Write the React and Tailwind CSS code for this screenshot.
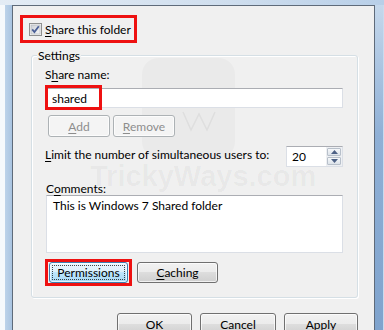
import React from 'react';

const U = ({ children }) => <span className="underline underline-offset-[2px]">{children}</span>;

const WinButton = ({ children, className = '', disabled = false, focused = false }) => {
    let look = 'border-[#707070] bg-[linear-gradient(#f2f2f2_0%,#ebebeb_50%,#dddddd_50%,#cfcfcf_100%)] text-black';
    if (disabled) look = 'border-[#adb2b5] bg-[#f4f4f4] text-[#8d8d8d]';
    if (focused) look = 'border-[#3c7fb1] bg-[linear-gradient(#eaf6fd_0%,#d9f0fc_50%,#bee6fd_50%,#a7d9f5_100%)] text-black';
    return (
        <div className={`relative flex items-center justify-center rounded-[3px] border shadow-[inset_0_0_0_1px_rgba(255,255,255,0.7)] ${look} ${className}`}>
            {focused && <div className="absolute inset-[2px] border border-dotted border-black/70"></div>}
            <span className="relative">{children}</span>
        </div>
    );
};

const Checkbox = () => (
    <svg width="13" height="13" viewBox="0 0 13 13" className="shrink-0">
        <defs>
            <linearGradient id="cbg" x1="0" y1="0" x2="1" y2="1">
                <stop offset="0" stopColor="#cbcfd5" />
                <stop offset="1" stopColor="#f6f6f6" />
            </linearGradient>
        </defs>
        <rect x="0.5" y="0.5" width="12" height="12" fill="#f4f4f4" stroke="#8e8f8f" />
        <rect x="2" y="2" width="9" height="9" fill="url(#cbg)" stroke="#aeb3b9" strokeWidth="0.6" />
        <path d="M3.2 6.4 L5.4 9 L9.8 3.2" fill="none" stroke="#4a5f97" strokeWidth="1.8" />
    </svg>
);

const App = () => {
    return (
        <div className="relative w-[384px] h-[330px] overflow-hidden bg-[linear-gradient(90deg,#f3f7fb_0%,#c9dbee_100%)] font-['Lato',sans-serif] text-[12px] leading-[15px] text-black">
            {/* Window frame top strip */}
            <div className="h-[5px] bg-[linear-gradient(90deg,#e4ecf5,#cfdeee_60%,#b8cfe8)]"></div>

            <div className="flex h-[325px]">
                {/* Left glass frame */}
                <div className="w-[12px] bg-[linear-gradient(90deg,#f6f9fc_0%,#f6f9fc_40%,#bcd2e9_45%,#a9c4e1_100%)]"></div>

                {/* Dialog body */}
                <div className="relative w-[363px] border-l border-t border-r border-[#5f6b7a] bg-[#f0f0f0]">
                    {/* Faint watermark */}
                    <div className="pointer-events-none absolute left-[129px] top-[52px] h-[100px] w-[93px] rounded-[16px] bg-black/[0.025]">
                        <svg className="absolute left-[40px] top-[52px]" width="34" height="22" viewBox="0 0 34 22">
                            <path d="M1 2 L9 20 L17 4 L25 20 L33 2" fill="none" stroke="rgba(0,0,0,0.05)" strokeWidth="1.5" />
                        </svg>
                    </div>
                    <div className="pointer-events-none absolute left-[77px] top-[154px] font-['Liberation_Sans',sans-serif] text-[29px] font-bold leading-[32px] text-black/[0.04]">
                        TrickyWays.com
                    </div>

                    {/* Share this folder */}
                    <div className="ml-[7px] mt-[9px] flex h-[28px] w-[117px] items-center border-[3px] border-[#ee1111] pl-[6px]">
                        <Checkbox />
                        <span className="ml-[3px]"><U>S</U>hare this folder</span>
                    </div>

                    {/* Settings group */}
                    <div className="relative ml-[18px] mt-[12px] h-[243px] w-[327px] rounded-[3px] border border-[#d5dfe5] shadow-[inset_1px_1px_0_#ffffff,1px_1px_0_#ffffff]">
                        <span className="absolute left-[5px] top-[-8px] bg-[#f0f0f0] px-[1px]">Settings</span>

                        <div className="ml-[13px] mt-[11px]">S<U>h</U>are name:</div>

                        <div className="relative ml-[13px] mt-[6px] flex h-[20px] w-[298px] items-center border border-[#dbdfe6] border-t-[#abadb3] bg-white pl-[6px]">
                            shared
                            <div className="absolute left-[-1px] top-[-4px] h-[25px] w-[57px] border-[3px] border-[#ee1111]"></div>
                        </div>

                        <div className="ml-[16px] mt-[7px] flex gap-[3px]">
                            <WinButton disabled className="h-[22px] w-[62px]"><U>A</U>dd</WinButton>
                            <WinButton disabled className="h-[22px] w-[62px]"><U>R</U>emove</WinButton>
                        </div>

                        <div className="ml-[13px] mr-[14px] mt-[9px] flex items-start justify-between">
                            <span className="pt-[1px]"><U>L</U>imit the number of simultaneous users to:</span>
                            <div className="flex h-[21px] w-[57px] border border-[#dbdfe6] border-t-[#abadb3] bg-white">
                                <div className="flex-1 pl-[5px] pt-[2px]">20</div>
                                <div className="flex w-[16px] flex-col gap-[1px] bg-[#eef0f3] p-[1px]">
                                    <div className="flex flex-1 items-center justify-center rounded-[1px] border border-[#b8c0ca] bg-[linear-gradient(#f6f8fa,#dde3ea)]">
                                        <svg width="7" height="4" viewBox="0 0 7 4"><path d="M0 4 L3.5 0 L7 4 Z" fill="#4d6185" /></svg>
                                    </div>
                                    <div className="flex flex-1 items-center justify-center rounded-[1px] border border-[#b8c0ca] bg-[linear-gradient(#f6f8fa,#dde3ea)]">
                                        <svg width="7" height="4" viewBox="0 0 7 4"><path d="M0 0 L3.5 4 L7 0 Z" fill="#4d6185" /></svg>
                                    </div>
                                </div>
                            </div>
                        </div>

                        <div className="ml-[14px] mt-[15px] h-[13px] leading-[13px]">C<U>o</U>mments:</div>

                        <div className="ml-[14px] h-[58px] w-[297px] border border-[#dbdfe6] border-t-[#abadb3] bg-white pl-[6px] pt-[2px]">
                            This is Windows 7 Shared folder
                        </div>

                        <div className="ml-[13px] mt-[6px] flex items-center">
                            <div className="h-[27px] w-[87px] border-[3px] border-[#ee1111] pl-[1px]">
                                <WinButton focused className="h-[21px] w-[79px]">Permissions</WinButton>
                            </div>
                            <WinButton className="ml-[5px] h-[21px] w-[81px]"><U>C</U>aching</WinButton>
                        </div>
                    </div>

                    {/* Dialog buttons */}
                    <div className="mr-[16px] mt-[15px] flex justify-end gap-[8px]">
                        <WinButton className="h-[23px] w-[75px]">OK</WinButton>
                        <WinButton className="h-[23px] w-[76px]">Cancel</WinButton>
                        <WinButton className="h-[23px] w-[74px]">Apply</WinButton>
                    </div>
                </div>

                {/* Right glass frame */}
                <div className="w-[8px] bg-[linear-gradient(180deg,#c5d8ec_0%,#8fb0d6_40%,#7fa3cd_100%)]"></div>
            </div>
        </div>
    );
};

export default App;
